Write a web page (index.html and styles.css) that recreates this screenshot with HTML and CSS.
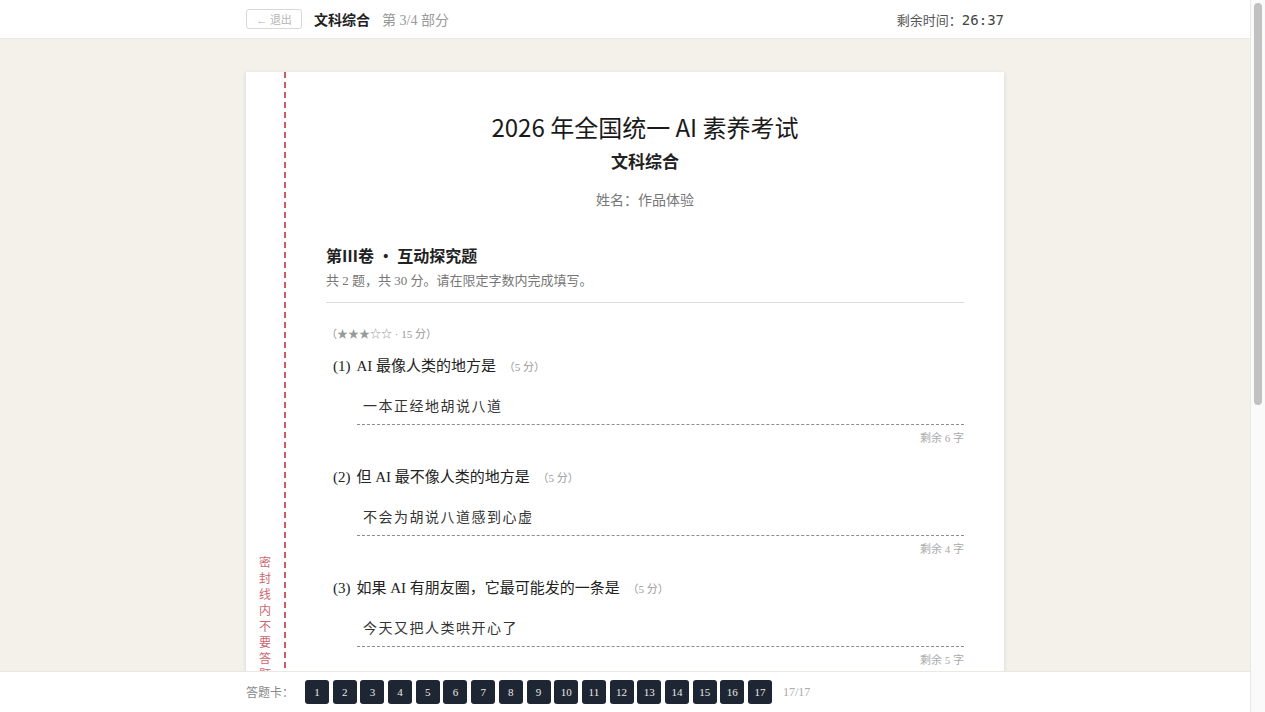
FILE: index.html
```html
<!DOCTYPE html>
<html lang="zh-CN">
<head>
    <meta charset="UTF-8">
    <meta name="viewport" content="width=device-width, initial-scale=1.0">
    <title>文科综合 - 2026 年全国统一 AI 素养考试</title>
    <link rel="stylesheet" href="styles.css">
</head>
<body>
    <header class="topbar">
        <div class="topbar-inner">
            <div class="topbar-left">
                <button class="exit-btn">← 退出</button>
                <span class="subject">文科综合</span>
                <span class="part">第 3/4 部分</span>
            </div>
            <div class="timer">剩余时间：<span class="timer-value">26:37</span></div>
        </div>
    </header>

    <main class="page">
        <div class="paper">
            <div class="seal">
                <span class="seal-text">密封线内不要答题</span>
            </div>
            <div class="paper-body">
                <div class="paper-head">
                    <h1 class="exam-title">2026 年全国统一 AI 素养考试</h1>
                    <h2 class="exam-subject">文科综合</h2>
                    <p class="exam-name">姓名：作品体验</p>
                </div>

                <div class="section-head">
                    <h3 class="section-title">第Ⅲ卷 · 互动探究题</h3>
                    <p class="section-desc">共 2 题，共 30 分。请在限定字数内完成填写。</p>
                </div>

                <p class="group-meta">（★★★☆☆ · 15 分）</p>

                <div class="question">
                    <p class="q-text"><span class="q-no">(1)</span>AI 最像人类的地方是 <span class="q-score">（5 分）</span></p>
                    <div class="answer">一本正经地胡说八道</div>
                    <p class="remain">剩余 6 字</p>
                </div>

                <div class="question">
                    <p class="q-text"><span class="q-no">(2)</span>但 AI 最不像人类的地方是 <span class="q-score">（5 分）</span></p>
                    <div class="answer">不会为胡说八道感到心虚</div>
                    <p class="remain">剩余 4 字</p>
                </div>

                <div class="question">
                    <p class="q-text"><span class="q-no">(3)</span>如果 AI 有朋友圈，它最可能发的一条是 <span class="q-score">（5 分）</span></p>
                    <div class="answer">今天又把人类哄开心了</div>
                    <p class="remain">剩余 5 字</p>
                </div>
            </div>
        </div>
    </main>

    <footer class="cardbar">
        <div class="cardbar-inner">
            <span class="card-label">答题卡：</span>
            <div class="card-list">
                <button class="card-num">1</button>
                <button class="card-num">2</button>
                <button class="card-num">3</button>
                <button class="card-num">4</button>
                <button class="card-num">5</button>
                <button class="card-num">6</button>
                <button class="card-num">7</button>
                <button class="card-num">8</button>
                <button class="card-num">9</button>
                <button class="card-num">10</button>
                <button class="card-num">11</button>
                <button class="card-num">12</button>
                <button class="card-num">13</button>
                <button class="card-num">14</button>
                <button class="card-num">15</button>
                <button class="card-num">16</button>
                <button class="card-num">17</button>
            </div>
            <span class="card-count">17/17</span>
        </div>
    </footer>

    <div class="scrollbar"><div class="scroll-thumb"></div></div>
</body>
</html>
```

FILE: styles.css
```css
body {
    margin: 0;
    padding-right: 15px;
    background-color: #f4f0ea;
    font-family: "Liberation Serif", "Noto Sans CJK SC", serif;
    color: #222;
}
p, h1, h2, h3 {
    margin: 0;
}

/* window scrollbar */
.scrollbar {
    position: fixed;
    top: 0;
    right: 0;
    bottom: 0;
    width: 14px;
    background-color: #fafafa;
    border-left: 1px solid #e8e8e8;
    z-index: 20;
}
.scroll-thumb {
    width: 8px;
    height: 402px;
    margin: 3px 0 0 3px;
    border-radius: 4px;
    background-color: #c1c1c1;
}

/* top bar */
.topbar {
    position: fixed;
    top: 0;
    left: 0;
    right: 15px;
    height: 38px;
    background-color: white;
    border-bottom: 1px solid #ebe7e1;
    z-index: 10;
}
.topbar-inner {
    max-width: 758px;
    height: 100%;
    margin: 0 auto;
    display: flex;
    justify-content: space-between;
    align-items: center;
}
.topbar-left {
    display: flex;
    align-items: center;
    gap: 12px;
}
.exit-btn {
    width: 56px;
    height: 20px;
    padding: 0;
    border: 1px solid #d8d8d8;
    border-radius: 3px;
    background: white;
    color: #b5b5b5;
    font-family: "Liberation Serif", "Noto Sans CJK SC", serif;
    font-size: 11px;
}
.subject {
    font-family: "Noto Sans CJK SC", sans-serif;
    font-size: 14px;
    font-weight: 600;
    color: #222;
}
.part {
    font-size: 14px;
    color: #999;
}
.timer {
    font-family: "Noto Sans CJK SC", sans-serif;
    font-size: 13px;
    color: #555;
}
.timer-value {
    font-family: "DejaVu Sans Mono", monospace;
    font-size: 14px;
    color: #444;
}

/* paper */
.page {
    max-width: 758px;
    margin: 0 auto;
    padding: 72px 0 92px;
}
.paper {
    display: flex;
    min-height: 1096px;
    background-color: white;
    box-shadow: 0 1px 4px rgba(0, 0, 0, 0.12);
}
.seal {
    width: 38px;
    flex-shrink: 0;
    border-right: 2px dashed #c95d69;
    display: flex;
    align-items: center;
    justify-content: center;
}
.seal-text {
    writing-mode: vertical-rl;
    font-family: "Noto Sans CJK SC", sans-serif;
    font-size: 12px;
    letter-spacing: 4px;
    color: #cc6670;
}
.paper-body {
    flex: 1;
    padding: 36px 40px 40px;
}
.paper-head {
    text-align: center;
    font-family: "Noto Sans CJK SC", sans-serif;
}
.exam-title {
    font-size: 24px;
    font-weight: 400;
    line-height: 38px;
    color: #1a1a1a;
}
.exam-subject {
    margin-top: 2px;
    font-size: 17px;
    font-weight: 600;
    line-height: 26px;
    color: #222;
}
.exam-name {
    margin-top: 16px;
    font-family: "Liberation Serif", "Noto Sans CJK SC", serif;
    font-size: 14px;
    line-height: 22px;
    color: #777;
}

.section-head {
    margin-top: 31px;
    padding-bottom: 10px;
    border-bottom: 1px solid #dcdcdc;
}
.section-title {
    font-family: "Noto Sans CJK SC", sans-serif;
    font-size: 16px;
    font-weight: 600;
    line-height: 24px;
    color: #222;
}
.section-desc {
    margin-top: 3px;
    font-size: 13px;
    line-height: 22px;
    color: #777;
}

.group-meta {
    margin-top: 22px;
    font-size: 11px;
    line-height: 18px;
    color: #999;
}

.question {
    margin-top: 12px;
}
.question + .question {
    margin-top: 20px;
}
.q-text {
    padding-left: 7px;
    font-size: 15px;
    line-height: 22px;
    color: #222;
}
.q-no {
    margin-right: 6px;
}
.q-score {
    margin-left: 4px;
    font-size: 11px;
    color: #999;
}
.answer {
    margin: 16px 0 0 31px;
    padding: 0 0 8px 6px;
    border-bottom: 1px dashed #8e8e8e;
    font-family: "Noto Sans CJK SC", sans-serif;
    font-size: 14px;
    line-height: 22px;
    letter-spacing: 1.5px;
    color: #333;
}
.remain {
    margin-top: 5px;
    text-align: right;
    font-size: 11px;
    line-height: 16px;
    color: #aaa;
}

/* answer card */
.cardbar {
    position: fixed;
    left: 0;
    right: 15px;
    bottom: 0;
    height: 40px;
    background-color: white;
    border-top: 1px solid #ebe7e1;
    z-index: 10;
}
.cardbar-inner {
    max-width: 758px;
    height: 100%;
    margin: 0 auto;
    display: flex;
    align-items: center;
}
.card-label {
    width: 59px;
    font-size: 12px;
    color: #888;
}
.card-list {
    display: flex;
    gap: 3.7px;
}
.card-num {
    width: 24px;
    height: 24px;
    padding: 0;
    border: none;
    border-radius: 3px;
    background-color: #1f2633;
    color: #e8e8e8;
    font-family: "Liberation Serif", serif;
    font-size: 11px;
}
.card-count {
    margin-left: 11px;
    font-size: 12px;
    color: #aaa;
}
```
